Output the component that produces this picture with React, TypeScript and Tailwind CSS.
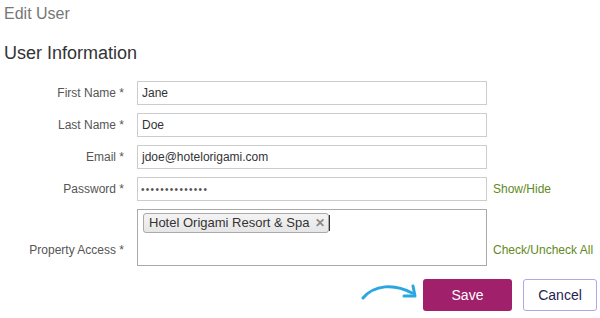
import React from "react";

const FONT = { fontFamily: '"Liberation Sans", Arial, sans-serif' };

function Row({
  label,
  children,
  extra,
}: {
  label: string;
  children: React.ReactNode;
  extra?: string;
}) {
  return (
    <div className="flex items-center h-[24px]">
      <label className="w-[126px] pr-[2px] text-right text-[12px] text-[#555]">{label}</label>
      <div className="ml-[11px] w-[350px]">{children}</div>
      {extra && <span className="ml-[6px] text-[12px] text-[#5f8a25]">{extra}</span>}
    </div>
  );
}

function Field({ value }: { value: string }) {
  return (
    <div className="h-[24px] border border-[#ccc] bg-white px-[4px] flex items-center text-[12px] text-[#333]">
      {value}
    </div>
  );
}

export default function App() {
  return (
    <div className="w-[600px] h-[318px] bg-white overflow-hidden" style={FONT}>
      <div className="pl-[4px] pt-[4px]">
        <h1 className="text-[16px] leading-[20px] text-[#777]">Edit User</h1>
        <h2 className="mt-[19px] text-[18px] leading-[20px] text-[#333]">User Information</h2>
      </div>

      <div className="mt-[18px] flex flex-col gap-[8px]">
        <Row label="First Name *">
          <Field value="Jane" />
        </Row>
        <Row label="Last Name *">
          <Field value="Doe" />
        </Row>
        <Row label="Email *">
          <Field value="jdoe@hotelorigami.com" />
        </Row>
        <Row label="Password *" extra="Show/Hide">
          <div className="h-[24px] border border-[#ccc] bg-white px-[3px] flex items-center text-[10px] tracking-[1.3px] text-[#555]">
            ••••••••••••••
          </div>
        </Row>

        <div className="flex items-end">
          <label className="w-[126px] pr-[2px] pb-[7px] text-right text-[12px] text-[#555]">
            Property Access *
          </label>
          <div className="ml-[11px] w-[350px] h-[57px] border border-[#aaa] bg-white pt-[3px] pl-[5px]">
            <div className="flex items-center">
              <span className="h-[20px] flex items-center gap-[6px] rounded-[3px] border border-[#aaa] bg-gradient-to-b from-[#f4f4f4] to-[#e6e6e6] pl-[5px] pr-[3px] text-[13px] text-[#333]">
                Hotel Origami Resort &amp; Spa
                <span className="text-[12px] font-bold text-[#888] leading-none">✕</span>
              </span>
              <span className="w-px h-[16px] bg-[#333]" />
            </div>
          </div>
          <span className="ml-[6px] pb-[7px] text-[12px] text-[#5f8a25]">Check/Uncheck All</span>
        </div>
      </div>

      <div className="mt-[13px] flex items-center pl-[360px]">
        <svg width="60" height="24" viewBox="0 0 60 24" className="mt-[-8px]">
          <path
            d="M3 19 C 14 6, 34 4, 52 14"
            fill="none"
            stroke="#2aa7e0"
            strokeWidth="3"
            strokeLinecap="round"
          />
          <path
            d="M44 17 L55 17 L53 7"
            fill="none"
            stroke="#2aa7e0"
            strokeWidth="3"
            strokeLinecap="round"
            strokeLinejoin="round"
          />
        </svg>
        <button className="ml-[3px] w-[89px] h-[32px] rounded-[3px] bg-[#a1206b] text-white text-[14px]">
          Save
        </button>
        <button className="ml-[11px] w-[74px] h-[32px] rounded-[3px] border border-[#b3a6e6] bg-white text-[14px] text-[#1f2450]">
          Cancel
        </button>
      </div>
    </div>
  );
}
